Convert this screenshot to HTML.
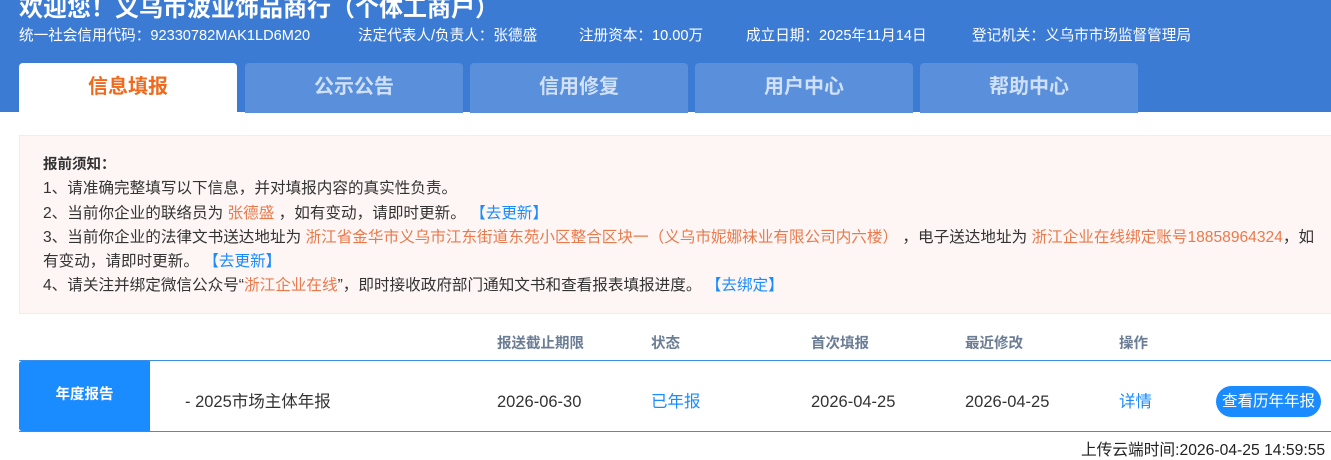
<!DOCTYPE html>
<html><head><meta charset="utf-8"><style>
*{margin:0;padding:0;box-sizing:border-box}
body{width:1331px;height:460px;overflow:hidden;background:#fff;font-family:"Liberation Sans","Noto Sans CJK SC",sans-serif;position:relative;color:#333}
.hd{position:absolute;left:0;top:0;width:1331px;height:112px;background:#3b7bd4}
.title{position:absolute;left:19px;top:-12px;font-size:24px;font-weight:bold;color:#fff;white-space:nowrap}
.info{position:absolute;top:24px;font-size:14.6px;color:#fff;white-space:nowrap}
.tab{position:absolute;top:63px;height:50px;width:218px;background:#5a8fdc;border-radius:4px 4px 0 0;color:#cfe0f7;font-size:20px;font-weight:bold;text-align:center;line-height:48px}
.tab.on{background:#fff;color:#f06a1e}
.notice{position:absolute;left:19px;top:135px;width:1320px;height:179px;background:#fdf6f5;border:1px solid #eee;padding:17px 0 0 23px;font-size:15.6px;line-height:24.3px;color:#333;white-space:nowrap}
.o{color:#ea7a4c}.b{color:#1a8cff}
.th{position:absolute;top:332px;font-size:14.5px;font-weight:bold;color:#6b7d95}
.row{position:absolute;left:19px;top:360px;width:1312px;height:72px;border-top:1px solid #3a8ee6;border-bottom:1px solid #3a8ee6}
.cell{position:absolute;top:392px;height:20px;line-height:20px;font-size:16.5px;color:#333;white-space:nowrap}
.cell.b{color:#1a8cff}
</style></head><body>
<div class="hd">
<div class="title">欢迎您！义乌市波业饰品商行（个体工商户）</div>
<div class="info" style="left:19px">统一社会信用代码：92330782MAK1LD6M20</div>
<div class="info" style="left:358px">法定代表人/负责人：张德盛</div>
<div class="info" style="left:579px">注册资本：10.00万</div>
<div class="info" style="left:746px">成立日期：2025年11月14日</div>
<div class="info" style="left:972px">登记机关：义乌市市场监督管理局</div>
<div class="tab on" style="left:19px">信息填报</div>
<div class="tab" style="left:245px">公示公告</div>
<div class="tab" style="left:470px">信用修复</div>
<div class="tab" style="left:695px">用户中心</div>
<div class="tab" style="left:920px">帮助中心</div>
</div>
<div class="notice">
<div style="font-weight:bold;font-size:14.5px">报前须知：</div>
<div>1、请准确完整填写以下信息，并对填报内容的真实性负责。</div>
<div>2、当前你企业的联络员为 <span class="o">张德盛</span> ，如有变动，请即时更新。 <span class="b">【去更新】</span></div>
<div>3、当前你企业的法律文书送达地址为 <span class="o">浙江省金华市义乌市江东街道东苑小区整合区块一（义乌市妮娜袜业有限公司内六楼）</span> ，电子送达地址为 <span class="o">浙江企业在线绑定账号18858964324</span>，如<br>有变动，请即时更新。 <span class="b">【去更新】</span></div>
<div>4、请关注并绑定微信公众号“<span class="o">浙江企业在线</span>”，即时接收政府部门通知文书和查看报表填报进度。 <span class="b">【去绑定】</span></div>
</div>
<div class="th" style="left:497px">报送截止期限</div>
<div class="th" style="left:651px">状态</div>
<div class="th" style="left:811px">首次填报</div>
<div class="th" style="left:965px">最近修改</div>
<div class="th" style="left:1119px">操作</div>
<div class="row"><div style="position:absolute;left:0;top:0;width:131px;height:70px;background:#1a8cff;border-radius:3px 0 0 3px;color:#fff;font-weight:bold;font-size:14.5px;text-align:center;line-height:68px">年度报告</div></div>
<div class="cell" style="left:185px">- 2025市场主体年报</div>
<div class="cell" style="left:497px">2026-06-30</div>
<div class="cell b" style="left:651px">已年报</div>
<div class="cell" style="left:811px">2026-04-25</div>
<div class="cell" style="left:965px">2026-04-25</div>
<div class="cell b" style="left:1119px">详情</div>
<div style="position:absolute;left:1216px;top:386px;width:105px;height:31px;border-radius:16px;background:#1a8cff;color:#fff;font-size:15.5px;text-align:center;line-height:31px">查看历年年报</div>
<div style="position:absolute;left:1081px;top:437px;font-size:15.7px;color:#222;white-space:nowrap">上传云端时间:2026-04-25 14:59:55</div>
</body></html>
